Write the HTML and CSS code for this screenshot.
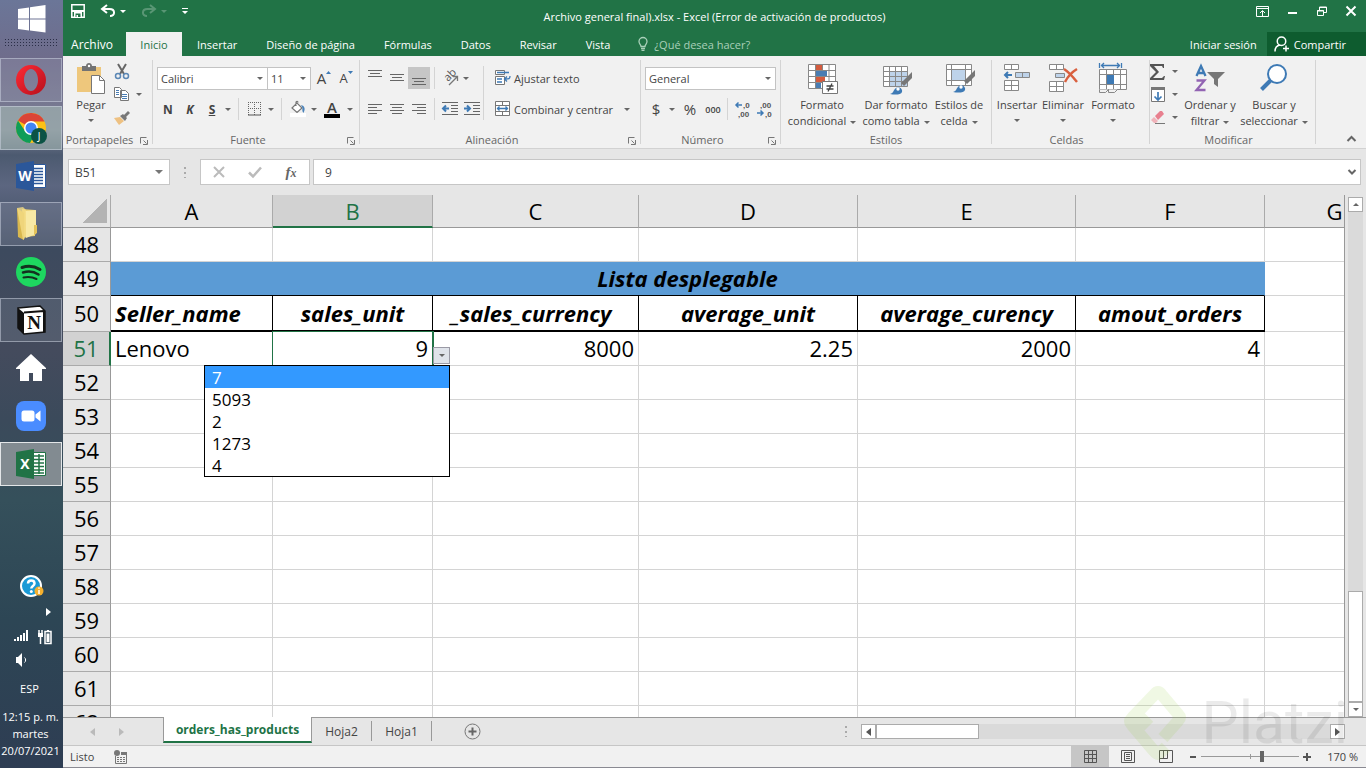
FILE: index.html
```html
<!DOCTYPE html>
<html lang="es">
<head>
  <meta charset="UTF-8" />
  <title>Archivo general final).xlsx - Excel</title>
  <link rel="stylesheet" href="styles.css">
</head>
<body>

  <!-- Barra de tareas -->
  <aside class="taskbar">
    <button class="start" aria-label="Inicio de Windows">
      <svg width="28" height="28" viewBox="0 0 28 28" fill="#fff"><path d="M0 4l11-1.600v11.100H0zM12 2.200L27.500 0v13.500H12zM0 14.500h11v11L0 24zM12 14.500h15.500V27.500L12 25.600z"/></svg>
    </button>
    <div class="grip"></div>
    <nav class="apps">
      <button class="app open" aria-label="Opera">
        <svg width="32" height="32" viewBox="0 0 32 32"><defs><linearGradient id="op" x1="0" y1="0" x2="1" y2="1"><stop offset="0" stop-color="#ff2a35"/><stop offset="1" stop-color="#b5101c"/></linearGradient></defs><path fill="url(#op)" fill-rule="evenodd" d="M16 1a15 15 0 1 0 0 30a15 15 0 1 0 0-30zM16 5c4 0 7 5 7 11s-3 11-7 11s-7-5-7-11s3-11 7-11z"/></svg>
      </button>
      <button class="app open light" aria-label="Google Chrome">
        <svg width="32" height="32" viewBox="0 0 32 32"><circle cx="16" cy="16" r="15" fill="#fbc116"/><path fill="#db4437" d="M16 16L3 8.500A15 15 0 0 1 29.500 9.500H16z"/><path fill="#0f9d58" d="M3 8.500A15 15 0 0 0 15 31l5-9-4-6-6 3z"/><circle cx="16" cy="16" r="7" fill="#fff"/><circle cx="16" cy="16" r="5.500" fill="#4285f4"/><circle cx="24" cy="24" r="8" fill="#0b5345"/><text x="24" y="28" text-anchor="middle" class="badge-text">J</text></svg>
      </button>
      <button class="app" aria-label="Word">
        <svg width="32" height="32" viewBox="0 0 32 32"><path fill="#fff" stroke="#2b579a" d="M16 4.500h14.500v23H16z"/><path stroke="#2b579a" stroke-width="1.500" d="M18 8.500h10M18 11.500h10M18 14.500h10M18 17.500h10M18 20.500h10M18 23.500h10"/><path fill="#2b579a" d="M1 4l18-3v30L1 28z"/><text x="10" y="21" text-anchor="middle" class="app-letter">W</text></svg>
      </button>
      <button class="app open" aria-label="Explorador de archivos">
        <svg width="32" height="36" viewBox="0 0 32 36"><path fill="#e9cf72" d="M7 3l13 1v26l-11 1z"/><path fill="#f8e9a5" d="M10 5l11-1v24l-10 4z"/><path fill="#d9b84f" d="M2 2l7 5v27l-6-3z"/><path fill="#f4dc86" d="M2 2l6-1 3 3v27l-3 3z" opacity=".8"/><path fill="#e3c25a" d="M19 19h3v8l-3 2z"/></svg>
      </button>
      <button class="app" aria-label="Spotify">
        <svg width="32" height="32" viewBox="0 0 32 32"><circle cx="16" cy="16" r="15" fill="#1ed760"/><g fill="none" stroke="#14301f" stroke-linecap="round"><path stroke-width="3" d="M7 11.500c6-2 13-1 18 2"/><path stroke-width="2.500" d="M8 16.500c5-1.500 11-1 15.500 2"/><path stroke-width="2" d="M8.500 21.500c5-1 9-.5 13 1.500"/></g></svg>
      </button>
      <button class="app open dark" aria-label="Notion">
        <svg width="32" height="32" viewBox="0 0 32 32"><path fill="#fff" stroke="#111" stroke-width="1.500" d="M3 4l22-2 5 5v21l-21 2-6-6z"/><path fill="#111" d="M3 4l6 5v21l-6-6z"/><path fill="none" stroke="#111" stroke-width="2" d="M9 8.500L29 7M29 7v21"/><text x="19" y="25" text-anchor="middle" class="notion-letter">N</text></svg>
      </button>
      <button class="app" aria-label="Carpeta personal">
        <svg width="32" height="32" viewBox="0 0 32 32" fill="#fff"><path d="M16 2L1 16v1h4v12h9v-8h4v8h9V17h4v-1z"/></svg>
      </button>
      <button class="app" aria-label="Zoom">
        <svg width="32" height="32" viewBox="0 0 32 32"><rect x="1" y="1" width="30" height="30" rx="8" fill="#4a8cff"/><rect x="6.500" y="10.500" width="13" height="11" rx="2.500" fill="#fff"/><path fill="#fff" d="M20.500 14.500l5-4v11l-5-4z"/></svg>
      </button>
      <button class="app open active" aria-label="Excel">
        <svg width="32" height="32" viewBox="0 0 32 32"><path fill="#fff" stroke="#217346" d="M16 4.500h14.500v23H16z"/><path stroke="#217346" stroke-width="1.500" d="M19 8h10M19 11.500h10M19 15h10M19 18.500h10M19 22h10M19 25h10M24 6v20"/><path fill="#217346" d="M1 4l18-3v30L1 28z"/><text x="10" y="21" text-anchor="middle" class="app-letter">X</text></svg>
      </button>
    </nav>

    <div class="tray">
      <svg class="help" width="24" height="24" viewBox="0 0 24 24"><circle cx="11" cy="11" r="10" fill="#1a9ad6" stroke="#fff" stroke-width="2"/><path fill="none" stroke="#fff" stroke-width="2.500" d="M8 8.500c0-4 6.500-4 6.500 0c0 2.500-3.200 2.500-3.200 5"/><circle cx="11.300" cy="16.500" r="1.500" fill="#fff"/><circle cx="19" cy="16" r="4.500" fill="#f5b02e"/><path stroke="#fff" stroke-width="1.500" d="M19 15v4M19 12.500v1.300"/></svg>
      <svg class="more" width="5" height="8" viewBox="0 0 5 8"><path fill="#fff" d="M0 0l5 4-5 4z"/></svg>
      <div class="tray-row">
        <svg width="16" height="14" viewBox="0 0 16 14" fill="#fff"><path d="M1 10h2v2H1zM4 8h2v4H4zM7 6h2v6H7zM10 4h2v8h-2zM13 1h2v11h-2z"/></svg>
        <svg width="16" height="16" viewBox="0 0 16 16"><path fill="none" stroke="#fff" stroke-width="1.500" d="M2 1v3M5 1v3M3.500 7v8M8 2.500h6v12H8z"/><path fill="#fff" d="M1 4h5v4H1zM9.500 4.500h3V13h-3zM10 1h2v2h-2z"/></svg>
      </div>
      <svg class="sound" width="13" height="14" viewBox="0 0 13 14"><path fill="#fff" d="M1 4h2l4-4v14l-4-4H1z"/><path fill="none" stroke="#fff" d="M9.500 4.500c1.500 1 1.500 4 0 5"/></svg>
      <span class="lang">ESP</span>
      <time class="clock" datetime="2021-07-20T12:15">12:15 p. m.<br>martes<br>20/07/2021</time>
    </div>
  </aside>

  <main class="excel">
    <header class="titlebar">
      <div class="quick">
        <button aria-label="Guardar"><svg width="14" height="14" viewBox="0 0 14 14"><path fill="none" stroke="#fff" stroke-width="1.500" d="M.8.800h12.400v12.400H.8z"/><path fill="#fff" d="M1 6h12v2H1zM3 8h8v6H3z"/><path fill="#217346" d="M4.500 9.500h5V13h-5z"/><path fill="#fff" d="M5.500 11H7v2H5.500z"/></svg></button>
        <button aria-label="Deshacer"><svg width="16" height="14" viewBox="0 0 16 14"><path fill="none" stroke="#fff" stroke-width="2" d="M7 1L2 5l5 4M2 5h7.500c6 0 6 7 .5 7"/></svg><i class="caret"></i></button>
        <button class="off" aria-label="Rehacer"><svg width="16" height="14" viewBox="0 0 16 14"><path fill="none" stroke="#fff" stroke-width="2" d="M9 1l5 4-5 4M14 5H6.500C.5 5 .5 12 6 12"/></svg><i class="caret"></i></button>
        <button aria-label="Personalizar barra"><svg width="6" height="7" viewBox="0 0 6 7"><path fill="#fff" d="M0 0h6v1H0zM0 3h6L3 6z"/></svg></button>
      </div>
      <h1>Archivo general final).xlsx - Excel (Error de activación de productos)</h1>
      <div class="window-buttons">
        <button aria-label="Opciones de cinta"><svg width="13" height="11" viewBox="0 0 13 11"><path fill="none" stroke="#fff" d="M.5.500h12v10H.5zM0 2.500h13M6.500 10V5M4 7l2.500-2.500L9 7"/></svg></button>
        <button aria-label="Minimizar"><svg width="10" height="11" viewBox="0 0 10 11"><path fill="#fff" d="M0 6h9v2H0z"/></svg></button>
        <button aria-label="Restaurar"><svg width="10" height="10" viewBox="0 0 10 10"><path fill="none" stroke="#fff" d="M.5 4.500h6v5h-6zM0 5h7M2.500 4V1h7v5.500H7M2.500 1.500h7"/></svg></button>
        <button aria-label="Cerrar"><svg width="10" height="10" viewBox="0 0 10 10"><path stroke="#fff" stroke-width="2" d="M.5.500l9 9M9.500.500l-9 9"/></svg></button>
      </div>
    </header>

    <nav class="tabs">
      <button class="tab file">Archivo</button>
      <button class="tab selected">Inicio</button>
      <button class="tab">Insertar</button>
      <button class="tab">Diseño de página</button>
      <button class="tab">Fórmulas</button>
      <button class="tab">Datos</button>
      <button class="tab">Revisar</button>
      <button class="tab">Vista</button>
      <button class="tell-me"><svg width="10" height="14" viewBox="0 0 10 14"><path fill="none" stroke="#a9d0b9" stroke-width="1.300" d="M3 9.500C3 7.500 1 7 1 4.500a4 4 0 0 1 8 0C9 7 7 7.500 7 9.500zM3 11.500h4M3.500 13.300h3"/></svg>¿Qué desea hacer?</button>
      <button class="login">Iniciar sesión</button>
      <button class="share"><svg width="16" height="16" viewBox="0 0 16 16"><path fill="none" stroke="#fff" stroke-width="1.500" d="M1 15.500c0-4 2-6 5-6.500M7.500 1a4 4 0 1 1 0 8.500a4 4 0 0 1 0-8.500M9 12.500h6M12 9.500v6"/></svg>Compartir</button>
    </nav>

    <!-- Cinta de opciones -->
    <section class="ribbon">
      <div class="group g-clipboard">
        <div class="group-body">
          <button class="big paste">
            <svg width="30" height="32" viewBox="0 0 30 32"><path fill="#eec77c" d="M1 4h24v25H1z"/><path fill="#737373" d="M6 3h4c0-4 6-4 6 0h4v5H6z"/><circle cx="13" cy="3" r="1.200" fill="#fff"/><path fill="#fff" stroke="#777" d="M15.500 12.500h8l5 5v13h-13z"/><path fill="none" stroke="#777" d="M23.500 12.500v5h5"/></svg>
            <span>Pegar</span><i class="caret"></i>
          </button>
          <div class="small-column">
            <button aria-label="Cortar"><svg width="16" height="16" viewBox="0 0 16 16"><path stroke="#666" stroke-width="2" d="M4 0l6 10M12 0L6 10"/><g fill="none" stroke="#5b87b5" stroke-width="1.500"><circle cx="4" cy="12" r="2.500"/><circle cx="12" cy="12" r="2.500"/></g></svg></button>
            <button aria-label="Copiar"><svg width="16" height="16" viewBox="0 0 16 16"><path fill="#fff" stroke="#777" d="M.5.500h5l2 2v8h-7zM6.500 3.500h5l3 3v7h-8z"/><path stroke="#4a7db3" d="M2 3.500h3M2 5.500h3M2 7.500h3M8 7.500h5M8 9.500h5M8 11.500h5"/></svg><i class="caret"></i></button>
            <button aria-label="Copiar formato"><svg width="16" height="16" viewBox="0 0 16 16"><path fill="#eec182" d="M0 8l6-1 4 4-5 4z"/><path fill="#777" d="M6 6l3-2 4 4-2 3zM10 5l4-4 2 2-4 4z"/></svg></button>
          </div>
        </div>
        <div class="group-label">Portapapeles<svg class="launcher" width="8" height="8" viewBox="0 0 8 8"><path fill="none" stroke="#777" d="M.5 6.500v-6h6M3.500 3.500l3 3M7.500 3v4.500H3"/></svg></div>
      </div>

      <div class="group g-font">
        <div class="group-body rows">
          <div class="row">
            <select class="combo font-name" aria-label="Fuente"><option>Calibri</option></select>
            <select class="combo font-size" aria-label="Tamaño de fuente"><option>11</option></select>
            <button class="tool grow" aria-label="Aumentar tamaño">A<svg width="5" height="3" viewBox="0 0 5 3"><path fill="#3e7ab5" d="M0 3l2.500-3L5 3z"/></svg></button>
            <button class="tool grow less" aria-label="Disminuir tamaño">A<svg width="5" height="3" viewBox="0 0 5 3"><path fill="#3e7ab5" d="M0 0h5L2.500 3z"/></svg></button>
          </div>
          <div class="row">
            <button class="tool bold">N</button>
            <button class="tool bold italic">K</button>
            <button class="tool bold under">S</button>
            <button class="drop" aria-label="Más subrayado"><i class="caret"></i></button>
            <span class="sep"></span>
            <button class="tool" aria-label="Bordes"><svg width="14" height="14" viewBox="0 0 14 14"><path fill="none" stroke="#666" stroke-dasharray="1 1" d="M.5 0v13M6.500 0v13M12.500 0v13M0 .5h13M0 6.500h13"/><path stroke="#555" d="M0 13h13"/></svg></button>
            <button class="drop" aria-label="Más bordes"><i class="caret"></i></button>
            <span class="sep"></span>
            <button class="tool" aria-label="Color de relleno"><svg width="16" height="16" viewBox="0 0 16 16"><path fill="#fff" stroke="#777" stroke-width="1.200" d="M2 7l5-5 5 5-5 4.500zM6 5V1.500c0-1.500 2-1.500 2 0"/><path fill="#4a82b9" d="M11 4c4 1 4.500 4 2.500 8c-1-1-1.500-3-1-5z"/><path fill="#fff" d="M0 12h16v4H0z"/></svg></button>
            <button class="drop" aria-label="Más rellenos"><i class="caret"></i></button>
            <button class="tool color"><span>A</span></button>
            <button class="drop" aria-label="Más colores"><i class="caret"></i></button>
          </div>
        </div>
        <div class="group-label">Fuente<svg class="launcher" width="8" height="8" viewBox="0 0 8 8"><path fill="none" stroke="#777" d="M.5 6.500v-6h6M3.500 3.500l3 3M7.500 3v4.500H3"/></svg></div>
      </div>

      <div class="group g-align">
        <div class="group-body">
          <div class="rows align-left">
            <div class="row">
              <button class="tool" aria-label="Alinear arriba"><svg width="14" height="16" viewBox="0 0 14 16"><path stroke="#666" d="M0 .5h14M2 3.500h10M0 6.500h14"/></svg></button>
              <button class="tool" aria-label="Alinear en medio"><svg width="14" height="16" viewBox="0 0 14 16"><path stroke="#666" d="M0 4.500h14M2 7.500h10M0 10.500h14"/></svg></button>
              <button class="tool pressed" aria-label="Alinear abajo"><svg width="14" height="16" viewBox="0 0 14 16"><path stroke="#666" d="M0 8.500h14M2 11.500h10M0 14.500h14"/></svg></button>
              <span class="sep"></span>
              <button class="tool" aria-label="Orientación"><svg width="17" height="16" viewBox="0 0 17 16"><text x="0" y="0" transform="translate(6 12) rotate(-45)" class="ab">ab</text><path fill="none" stroke="#777" stroke-width="1.300" d="M7 15l8-8M11 6.500h4.500V11"/></svg></button>
              <button class="drop" aria-label="Más orientación"><i class="caret"></i></button>
            </div>
            <div class="row">
              <button class="tool" aria-label="Alinear a la izquierda"><svg width="14" height="12" viewBox="0 0 14 12"><path stroke="#666" d="M0 1.500h14M0 4.500h9M0 7.500h14M0 10.500h9"/></svg></button>
              <button class="tool" aria-label="Centrar"><svg width="14" height="12" viewBox="0 0 14 12"><path stroke="#666" d="M0 1.500h14M2 4.500h10M0 7.500h14M2 10.500h10"/></svg></button>
              <button class="tool" aria-label="Alinear a la derecha"><svg width="14" height="12" viewBox="0 0 14 12"><path stroke="#666" d="M0 1.500h14M5 4.500h9M0 7.500h14M5 10.500h9"/></svg></button>
              <span class="sep"></span>
              <button class="tool" aria-label="Disminuir sangría"><svg width="16" height="14" viewBox="0 0 16 14"><path stroke="#666" d="M0 .5h16M9 3.500h7M9 6.500h7M9 9.500h7M0 12.500h16"/><path fill="none" stroke="#3e7ab5" stroke-width="2" d="M7 6.500H1M4 3.500l-3 3 3 3"/></svg></button>
              <button class="tool" aria-label="Aumentar sangría"><svg width="16" height="14" viewBox="0 0 16 14"><path stroke="#666" d="M0 .5h16M9 3.500h7M9 6.500h7M9 9.500h7M0 12.500h16"/><path fill="none" stroke="#3e7ab5" stroke-width="2" d="M0 6.500h6M3 3.500l3 3-3 3"/></svg></button>
            </div>
          </div>
          <div class="rows align-right">
            <button class="wide"><svg width="16" height="16" viewBox="0 0 16 16"><path fill="#fff" stroke="#777" d="M.5.500h9v4h-9zM.5 6.500h9v8h-9z"/><path fill="none" stroke="#3e7ab5" stroke-width="1.300" d="M2 2.500h12M2 9h5M2 12h5M15 6c0 3-1 3-5 3M12 6.500L9.500 9l2.500 2.500"/></svg>Ajustar texto</button>
            <button class="wide"><svg width="16" height="16" viewBox="0 0 16 16"><path fill="#fff" stroke="#777" d="M.5.500h14v14H.5zM.5 4.500h14M.5 10.500h14M7.500.500v4M7.500 10.500v4"/><path fill="none" stroke="#3e7ab5" stroke-width="1.300" d="M2 7.500h11M4.500 5.500l-2 2 2 2M10.500 5.500l2 2-2 2"/></svg>Combinar y centrar<i class="caret"></i></button>
          </div>
        </div>
        <div class="group-label">Alineación<svg class="launcher" width="8" height="8" viewBox="0 0 8 8"><path fill="none" stroke="#777" d="M.5 6.500v-6h6M3.500 3.500l3 3M7.500 3v4.500H3"/></svg></div>
      </div>

      <div class="group g-number">
        <div class="group-body rows">
          <div class="row"><select class="combo number-format" aria-label="Formato de número"><option>General</option></select></div>
          <div class="row">
            <button class="tool sign">$</button>
            <button class="drop" aria-label="Más monedas"><i class="caret"></i></button>
            <button class="tool sign percent">%</button>
            <button class="tool zeros">000</button>
            <span class="sep"></span>
            <button class="tool" aria-label="Aumentar decimales"><svg width="16" height="18" viewBox="0 0 16 18"><text x="8" y="8" class="dec">,0</text><text x="3" y="17" class="dec">,00</text><path fill="none" stroke="#3e7ab5" stroke-width="1.500" d="M7 5H1M3.500 2.500L1 5l2.500 2.500"/></svg></button>
            <button class="tool" aria-label="Disminuir decimales"><svg width="16" height="18" viewBox="0 0 16 18"><text x="3" y="8" class="dec">,00</text><text x="8" y="17" class="dec">,0</text><path fill="none" stroke="#3e7ab5" stroke-width="1.500" d="M0 13h6M3.500 10.500L6 13l-2.500 2.500"/></svg></button>
          </div>
        </div>
        <div class="group-label">Número<svg class="launcher" width="8" height="8" viewBox="0 0 8 8"><path fill="none" stroke="#777" d="M.5 6.500v-6h6M3.500 3.500l3 3M7.500 3v4.500H3"/></svg></div>
      </div>

      <div class="group g-styles">
        <div class="group-body">
          <button class="big w-76">
            <svg width="32" height="32" viewBox="0 0 32 32"><path fill="#fff" stroke="#888" d="M2.500 1.500h27v24h-27zM2.500 7.500h27M2.500 13.500h27M2.500 19.500h27M9.500 1.500v24M16.500 1.500v24M23 1.500v24"/><path fill="#d35b3e" d="M10 2h6v5h-6zM10 14h9v5h-9z"/><path fill="#4a7db3" d="M10 8h11v5H10zM10 20h5v5h-5z"/><path fill="#fff" stroke="#777" d="M16.500 18.500h15v12h-15z"/><path stroke="#444" stroke-width="1.300" d="M20.500 23h7M20.500 26h7M26 20.500l-4 8"/></svg>
            <span>Formato</span><span>condicional<i class="caret"></i></span>
          </button>
          <button class="big w-72">
            <svg width="32" height="32" viewBox="0 0 32 32"><path fill="#fff" stroke="#888" d="M3.500 3.500h24v20h-24z"/><path fill="#bed3ea" d="M10 9h17v14H10z"/><path fill="none" stroke="#888" d="M3.500 8.500h24M3.500 13.500h24M3.500 18.500h24M9.500 3.500v20M15.500 3.500v20M21.500 3.500v20"/><path fill="#777" d="M32 9v6l-8 8-3-3z"/><path fill="#3e7ab5" d="M10 31c4-1 3-4 6-6s7 1 6 4-7 3-12 2z"/><circle cx="18" cy="26" r="1.700" fill="#fff"/></svg>
            <span>Dar formato</span><span>como tabla<i class="caret"></i></span>
          </button>
          <button class="big w-54">
            <svg width="32" height="32" viewBox="0 0 32 32"><path fill="#fff" stroke="#888" d="M3.500 1.500h25v21h-25zM3.500 6.500h25M3.500 17.500h25M8.500 1.500v21M22.500 1.500v21"/><path fill="#bed3ea" d="M9 7h13v10H9z"/><path fill="#777" d="M32 7v6l-8 8-3-3z"/><path fill="#3e7ab5" d="M10 29c4-1 3-4 6-6s7 1 6 4-7 3-12 2z"/><circle cx="18" cy="24" r="1.700" fill="#fff"/></svg>
            <span>Estilos de</span><span>celda<i class="caret"></i></span>
          </button>
        </div>
        <div class="group-label">Estilos</div>
      </div>

      <div class="group g-cells">
        <div class="group-body">
          <button class="big w-44">
            <svg width="28" height="32" viewBox="0 0 28 32"><path fill="#fff" stroke="#888" d="M1.500 1.500h14v5h-14zM8.500 1.500v5M1.500 17.500h14v10h-14zM1.500 22.500h14M8.500 17.500v10"/><path fill="#bed3ea" stroke="#888" d="M12.500 9.500h14v5h-14zM19.500 9.500v5"/><path fill="none" stroke="#3e7ab5" stroke-width="2" d="M9 12H2M5 9l-3 3 3 3"/></svg>
            <span>Insertar</span><i class="caret"></i>
          </button>
          <button class="big w-44">
            <svg width="30" height="32" viewBox="0 0 30 32"><path fill="#fff" stroke="#888" d="M1.500 1.500h14v5h-14zM8.500 1.500v5M1.500 18.500h14v10h-14zM1.500 23.500h14M8.500 18.500v10"/><path fill="#bed3ea" stroke="#888" d="M7.500 10.500h9v4h-9z"/><path fill="none" stroke="#d9603f" stroke-width="2.500" d="M16 6c5 3 9 8 13 13M29 6c-5 3-9 7-12 13"/></svg>
            <span>Eliminar</span><i class="caret"></i>
          </button>
          <button class="big w-52">
            <svg width="30" height="32" viewBox="0 0 30 32"><path fill="#fff" stroke="#888" d="M1.500 6.500h27v20h-27zM1.500 11.500h27M1.500 21.500h27M8.500 6.500v20M15.500 6.500v20M22.500 6.500v20"/><path fill="#f1f1f1" stroke="#888" d="M1.500 26.500v3h6l3-3v3h6l3-3"/><path fill="#3e7ab5" d="M9 12h7v9H9z"/><path fill="none" stroke="#3e7ab5" stroke-width="1.300" d="M1.500 0v5M23.500 0v5M3 2.500h19M6 0L3.500 2.500 6 5M19 0l2.500 2.500L19 5"/></svg>
            <span>Formato</span><i class="caret"></i>
          </button>
        </div>
        <div class="group-label">Celdas</div>
      </div>

      <div class="group g-edit">
        <div class="group-body">
          <div class="small-column">
            <button aria-label="Autosuma"><svg width="16" height="16" viewBox="0 0 16 16"><path fill="#555" d="M0 0h14v4h-1l-1-2H4l5 6-6 6h9l2-2h1l-1 4H0v-2l6-6-6-6z"/></svg><i class="caret"></i></button>
            <button aria-label="Rellenar"><svg width="16" height="16" viewBox="0 0 16 16"><path fill="#fff" stroke="#777" d="M1.500.500h13v14h-13z"/><path fill="#777" d="M1 0h14v3H1z"/><path fill="none" stroke="#3e7ab5" stroke-width="1.700" d="M8 5v8M4.500 9.500L8 13l3.500-3.500"/></svg><i class="caret"></i></button>
            <button aria-label="Borrar"><svg width="16" height="16" viewBox="0 0 16 16"><path fill="#e8808f" d="M5 6l5-5h2l2 3-6 6z"/><path fill="#f0b3ba" d="M4 7l4 4-2 2H4L1 10z"/><path stroke="#777" d="M5 13.500h10"/></svg><i class="caret"></i></button>
          </div>
          <button class="big w-60">
            <svg width="30" height="32" viewBox="0 0 30 32"><path fill="none" stroke="#3e7ab5" stroke-width="2.300" d="M1.500 13L6 3l4.500 10M3 10h6"/><path fill="none" stroke="#9264b3" stroke-width="2.300" d="M1.500 17.500h8l-8 9.500h9"/><path fill="#777" d="M12 9h18l-7 7v8l-4-3v-5z"/></svg>
            <span>Ordenar y</span><span>filtrar<i class="caret"></i></span>
          </button>
          <button class="big w-68">
            <svg width="30" height="32" viewBox="0 0 30 32"><circle cx="18" cy="11" r="9" fill="#fff" stroke="#3e7ab5" stroke-width="2"/><path stroke="#3e7ab5" stroke-width="4" d="M11.500 17.500l-9 9"/></svg>
            <span>Buscar y</span><span>seleccionar<i class="caret"></i></span>
          </button>
        </div>
        <div class="group-label">Modificar</div>
      </div>
      <button class="collapse" aria-label="Contraer la cinta"><svg width="9" height="6" viewBox="0 0 9 6"><path fill="none" stroke="#666" stroke-width="2" d="M.5 5l4-4 4 4"/></svg></button>
    </section>

    <section class="formula-bar">
      <select class="name-box" aria-label="Cuadro de nombres"><option>B51</option></select>
      <span class="dots"></span>
      <div class="formula-buttons">
        <button aria-label="Cancelar"><svg width="12" height="12" viewBox="0 0 12 12"><path stroke="#bbb" stroke-width="2" d="M1 1l10 10M11 1L1 11"/></svg></button>
        <button aria-label="Introducir"><svg width="14" height="12" viewBox="0 0 14 12"><path fill="none" stroke="#bbb" stroke-width="2.500" d="M1 6.500l4 4 8-9"/></svg></button>
        <button class="fx"><i>f</i><i class="x">x</i></button>
      </div>
      <div class="formula-field">
        <input type="text" value="9" aria-label="Barra de fórmulas">
        <svg width="8" height="6" viewBox="0 0 8 6"><path fill="none" stroke="#666" stroke-width="2" d="M.5 1L4 4.500 7.500 1"/></svg>
      </div>
    </section>

    <!-- Hoja -->
    <section class="sheet">
      <div class="sheet-view">
        <table class="cells">
          <colgroup><col class="c-head"><col class="c-a"><col class="c-b"><col class="c-c"><col class="c-d"><col class="c-e"><col class="c-f"><col class="c-g"></colgroup>
          <thead>
            <tr><th class="corner"></th><th>A</th><th class="current">B</th><th>C</th><th>D</th><th>E</th><th>F</th><th>G</th></tr>
          </thead>
          <tbody>
            <tr><th>48</th><td></td><td></td><td></td><td></td><td></td><td></td><td></td></tr>
            <tr class="title-row"><th>49</th><td colspan="6">Lista desplegable</td><td></td></tr>
            <tr class="name-row"><th>50</th><td class="first">Seller_name</td><td>sales_unit</td><td class="first indent">_sales_currency</td><td>average_unit</td><td>average_curency</td><td>amout_orders</td><td></td></tr>
            <tr class="data-row">
              <th class="current">51</th><td class="text">Lenovo</td>
              <td class="active-cell">9
                <button class="list-button" aria-label="Abrir lista"><i class="caret"></i></button>
                <select class="list" size="5" aria-label="sales_unit">
                  <option selected>7</option>
                  <option>5093</option>
                  <option>2</option>
                  <option>1273</option>
                  <option>4</option>
                </select>
              </td>
              <td>8000</td><td>2.25</td><td>2000</td><td>4</td><td></td>
            </tr>
            <tr><th>52</th><td></td><td></td><td></td><td></td><td></td><td></td><td></td></tr>
            <tr><th>53</th><td></td><td></td><td></td><td></td><td></td><td></td><td></td></tr>
            <tr><th>54</th><td></td><td></td><td></td><td></td><td></td><td></td><td></td></tr>
            <tr><th>55</th><td></td><td></td><td></td><td></td><td></td><td></td><td></td></tr>
            <tr><th>56</th><td></td><td></td><td></td><td></td><td></td><td></td><td></td></tr>
            <tr><th>57</th><td></td><td></td><td></td><td></td><td></td><td></td><td></td></tr>
            <tr><th>58</th><td></td><td></td><td></td><td></td><td></td><td></td><td></td></tr>
            <tr><th>59</th><td></td><td></td><td></td><td></td><td></td><td></td><td></td></tr>
            <tr><th>60</th><td></td><td></td><td></td><td></td><td></td><td></td><td></td></tr>
            <tr><th>61</th><td></td><td></td><td></td><td></td><td></td><td></td><td></td></tr>
            <tr><th>62</th><td></td><td></td><td></td><td></td><td></td><td></td><td></td></tr>
          </tbody>
        </table>
      </div>
      <div class="v-scroll">
        <button aria-label="Subir"><i class="caret up"></i></button>
        <div class="v-track"><div class="v-thumb"></div></div>
        <button aria-label="Bajar"><i class="caret"></i></button>
      </div>
    </section>

    <nav class="sheet-tabs">
      <div class="sheet-nav">
        <button aria-label="Hoja anterior"><i class="caret left"></i></button>
        <button aria-label="Hoja siguiente"><i class="caret right"></i></button>
      </div>
      <button class="sheet-tab selected">orders_has_products</button>
      <button class="sheet-tab">Hoja2</button>
      <button class="sheet-tab">Hoja1</button>
      <button class="add-sheet" aria-label="Hoja nueva"><svg width="17" height="17" viewBox="0 0 17 17"><circle cx="8.500" cy="8.500" r="7.500" fill="none" stroke="#777"/><path stroke="#666" stroke-width="2" d="M4.500 8.500h8M8.500 4.500v8"/></svg></button>
      <span class="dots"></span>
      <div class="h-scroll">
        <button aria-label="Izquierda"><i class="caret left"></i></button>
        <div class="h-track"><div class="h-thumb"></div></div>
        <button aria-label="Derecha"><i class="caret right"></i></button>
      </div>
    </nav>

    <footer class="status">
      <span>Listo</span>
      <button class="macro" aria-label="Grabar macro"><svg width="14" height="14" viewBox="0 0 14 14"><path fill="none" stroke="#777" d="M1.500 6v7.500h11v-11H7M3 7.500h2M6 7.500h2M9 7.500h2M3 9.500h2M6 9.500h2M9 9.500h2M3 11.500h2M6 11.500h2M9 11.500h2"/><path fill="#777" d="M7 2h6v3H7z"/><circle cx="3" cy="3" r="3" fill="#777"/></svg></button>
      <div class="views">
        <button class="view pressed" aria-label="Normal"><svg width="13" height="13" viewBox="0 0 13 13"><path fill="none" stroke="#555" d="M.5.500h12v12H.5zM.5 4.500h12M.5 8.500h12M4.500.500v12M8.500.500v12"/></svg></button>
        <button class="view" aria-label="Diseño de página"><svg width="14" height="13" viewBox="0 0 14 13"><path fill="none" stroke="#555" d="M.5.500h13v12H.5zM3.500 2.500h7v8h-7zM5 4.500h4M5 6.500h4M5 8.500h4"/></svg></button>
        <button class="view" aria-label="Vista previa de salto"><svg width="14" height="13" viewBox="0 0 14 13"><path fill="none" stroke="#555" d="M.5.500h13v12H.5zM.5 8.500h8v-8M4.500.500v8"/></svg></button>
      </div>
      <button class="zoom-step" aria-label="Alejar"><svg width="8" height="8" viewBox="0 0 8 8"><path fill="#555" d="M1 3h6v2H1z"/></svg></button>
      <input class="zoom" type="range" min="10" max="240" value="153" aria-label="Zoom">
      <button class="zoom-step" aria-label="Acercar"><svg width="8" height="8" viewBox="0 0 8 8"><path fill="#555" d="M0 3h8v2H0zM3 0h2v8H3z"/></svg></button>
      <span class="zoom-value">170 %</span>
    </footer>

    <div class="watermark">
      <svg width="64" height="76" viewBox="0 0 64 76"><path fill="none" stroke="#98ca3f" stroke-width="12" stroke-linejoin="round" d="M26 41l-9-9M40 53l15-17c3-3 3-4 0-7L39 10c-3-4-5-4-8 0L9 33c-3 3-3 4 0 7l22 26c3 4 5 4 8 0l4-4"/></svg>
      <span>Platzi</span>
    </div>
  </main>

</body>
</html>
```
FILE: styles.css
```css
* {
  box-sizing: border-box;
}

body {
  margin: 0;
  height: 100vh;
  display: flex;
  overflow: hidden;
  font-family: "Open Sans", "Noto Sans", sans-serif;
  font-size: 11px;
  color: #444;
}

button, select, input {
  font: inherit;
  color: inherit;
  margin: 0;
  padding: 0;
  border: none;
  background: none;
}

button {
  display: flex;
  align-items: center;
  justify-content: center;
  white-space: nowrap;
}

svg {
  display: block;
  flex: none;
  overflow: visible;
}

.caret {
  flex: none;
  display: inline-block;
  border: 3px solid transparent;
  border-top-color: #666;
  border-bottom: none;
}

.caret.up {
  border-bottom: 3px solid #666;
  border-top: none;
}

.caret.left {
  border: 4px solid transparent;
  border-right: 5px solid #555;
  border-left: none;
}

.caret.right {
  border: 4px solid transparent;
  border-left: 5px solid #555;
  border-right: none;
}

/* Barra de tareas */
.taskbar {
  flex: none;
  width: 63px;
  display: flex;
  flex-direction: column;
  color: #fff;
  background: linear-gradient(#6b7698 0, #6f6c8b 60px, #7b7f94 130px, #4c5a70 155px, #5c6680 185px, #3d4a5e 250px, #444b5d 350px, #3b4a5b 420px, #35505b 500px, #2d4655 620px, #2e3d53 100%);
}

.start {
  height: 38px;
}

.grip {
  height: 10px;
  margin: 0 4px 10px 4px;
  background-image: radial-gradient(circle, #2b2f48 1px, transparent 1px);
  background-size: 3px 3px;
}

.apps {
  display: flex;
  flex-direction: column;
  gap: 4px;
  padding-right: 1px;
}

.app {
  height: 44px;
  border: 1px solid transparent;
}

.app.open {
  background: rgba(160, 165, 185, 0.25);
  border-color: rgba(210, 215, 230, 0.5);
}

.app.open.light {
  background: rgba(165, 185, 180, 0.6);
}

.app.open.dark {
  background: rgba(130, 145, 160, 0.25);
}

.app.open.active {
  background: #828b91;
  border-color: #e3e6e8;
}

.badge-text {
  font-size: 10px;
  fill: #fff;
}

.app-letter {
  font-size: 14px;
  font-weight: 700;
  fill: #fff;
}

.notion-letter {
  font-family: "Liberation Serif", serif;
  font-size: 19px;
  font-weight: 700;
  fill: #111;
}

.tray {
  margin-top: auto;
  display: flex;
  flex-direction: column;
  align-items: center;
  padding-bottom: 9px;
}

.more {
  align-self: flex-end;
  margin: 9px 12px 13px;
}

.tray-row {
  display: flex;
  gap: 8px;
  padding-left: 2px;
}

.sound {
  align-self: flex-start;
  margin: 8px 15px 13px;
}

.lang {
  line-height: 17px;
  padding-right: 4px;
  margin-bottom: 11px;
}

.clock {
  line-height: 17px;
  padding-right: 2px;
  text-align: center;
  white-space: nowrap;
}

/* Ventana de Excel */
.excel {
  flex: 1;
  min-width: 0;
  display: flex;
  flex-direction: column;
  position: relative;
  background: #e6e6e6;
  border-bottom: 1px solid #8a8a92;
}

.titlebar {
  flex: none;
  height: 32px;
  display: flex;
  align-items: center;
  background: #217346;
  color: #fff;
}

.titlebar h1 {
  flex: 1;
  margin: 0;
  font-size: 11px;
  font-weight: 400;
  text-align: center;
}

.quick {
  display: flex;
  align-items: center;
  gap: 15px;
  width: 124px;
  padding: 0 0 10px 8px;
}

.quick button {
  gap: 4px;
}

.quick .caret {
  border-top-color: #fff;
}

.quick .off {
  opacity: 0.25;
}

.window-buttons {
  display: flex;
  justify-content: flex-end;
  align-items: center;
  gap: 19px;
  width: 124px;
  padding: 0 10px 10px 0;
}

.tabs {
  flex: none;
  height: 24px;
  display: flex;
  background: #217346;
  color: #fff;
}

.tab {
  padding: 0 14px 0 15px;
}

.tab.file {
  width: 63px;
  padding: 0 5px 0 0;
  font-size: 12px;
}

.tab.selected {
  width: 56px;
  padding: 0;
  background: #f1f1f1;
  color: #217346;
}

.tell-me {
  gap: 6px;
  margin-left: 14px;
  color: #a9d0b9;
}

.login {
  margin-left: auto;
  padding: 0 10px;
}

.share {
  gap: 4px;
  padding: 0 20px 0 7px;
  background: #0e5c2f;
}

/* Cinta */
.ribbon {
  flex: none;
  height: 93px;
  display: flex;
  padding: 4px 0;
  background: #f1f1f1;
  border-bottom: 1px solid #d2d2d2;
}

.group {
  flex: none;
  display: flex;
  flex-direction: column;
  border-right: 1px solid #d4d4d4;
}

.g-clipboard { width: 90px; }
.g-font { width: 207px; }
.g-align { width: 281px; }
.g-number { width: 140px; }
.g-styles { width: 211px; }
.g-cells { width: 158px; }
.g-edit { width: 166px; }

.group-body {
  flex: 1;
  display: flex;
}

.group-label {
  display: flex;
  height: 12px;
  line-height: 16px;
  justify-content: center;
  color: #666;
  position: relative;
}

.g-clipboard .group-label,
.g-font .group-label,
.g-align .group-label,
.g-number .group-label {
  padding-right: 16px;
}

.g-cells .group-label,
.g-edit .group-label {
  padding-right: 8px;
}

.launcher {
  position: absolute;
  right: 4px;
  top: 5px;
}

.rows {
  display: flex;
  flex-direction: column;
  gap: 9px;
  padding: 7px 0 0 4px;
}

.row {
  display: flex;
  height: 22px;
}

.tool {
  width: 22px;
  height: 22px;
}

.tool.pressed {
  background: #c6c6c6;
}

.drop {
  width: 10px;
}

.sep {
  width: 1px;
  margin: 0 5px;
  background: #d4d4d4;
}

.g-align .sep,
.g-number .sep {
  margin: 0 4px;
}

.combo {
  appearance: none;
  height: 23px;
  padding: 0 3px;
  border: 1px solid #c3c3c3;
  background: #fff url("data:image/svg+xml,%3Csvg xmlns='http://www.w3.org/2000/svg' width='6' height='3'%3E%3Cpath d='M0 0h6L3 3z' fill='%23666'/%3E%3C/svg%3E") no-repeat right 4px center;
}

.font-name {
  width: 111px;
}

.font-size {
  width: 43px;
  border-left: none;
}

.number-format {
  width: 131px;
}

.grow {
  align-items: center;
  width: 22px;
  margin-left: 2px;
  font-size: 15px;
}

.grow svg {
  align-self: flex-start;
  margin-top: 4px;
}

.grow.less {
  margin-left: 0;
  font-size: 13px;
}

.bold {
  font-size: 12px;
  font-weight: 700;
}

.italic {
  font-style: italic;
}

.under {
  text-decoration: underline;
}

.color {
  width: 26px;
}

.color span {
  width: 16px;
  height: 18px;
  line-height: 14px;
  font-size: 15px;
  font-weight: 600;
  border-bottom: 4px solid #000;
}

.ab {
  font-size: 11px;
  fill: #555;
}

.align-left {
  width: 124px;
  margin-right: 11px;
  background: linear-gradient(#d4d4d4, #d4d4d4) no-repeat right 6px / 1px 54px;
}

.align-right {
  padding-left: 0;
}

.wide {
  justify-content: flex-start;
  height: 22px;
  gap: 3px;
}

.wide .caret {
  margin-left: 8px;
}

.sign {
  font-size: 15px;
}

.percent {
  width: 26px;
}

.zeros {
  width: 20px;
  font-size: 9px;
  font-weight: 600;
}

.dec {
  font-family: "Liberation Sans", sans-serif;
  font-size: 8px;
  font-weight: 700;
  fill: #555;
}

.big {
  flex-direction: column;
  justify-content: flex-start;
  padding-top: 3px;
  line-height: 16px;
}

.big svg {
  margin-bottom: 2px;
}

.big > .caret {
  margin-top: 6px;
}

.big span .caret {
  margin-left: 4px;
  vertical-align: middle;
}

.paste {
  width: 36px;
  margin-left: 10px;
}

.w-44 { width: 44px; }
.w-52 { width: 52px; }
.w-54 { width: 54px; }
.w-60 { width: 60px; }
.w-68 { width: 68px; }
.w-72 { width: 72px; }
.w-76 { width: 76px; }

.g-styles .group-body {
  padding-left: 3px;
}

.g-cells .group-body {
  padding-left: 3px;
  gap: 2px;
}

.small-column {
  display: flex;
  flex-direction: column;
  padding-left: 5px;
}

.g-edit .small-column {
  width: 30px;
  padding-left: 0;
}

.small-column button {
  height: 23px;
  gap: 6px;
  justify-content: flex-start;
}

.collapse {
  margin: auto 10px 2px auto;
}

/* Barra de fórmulas */
.formula-bar {
  flex: none;
  display: flex;
  padding: 10px 5px;
  height: 46px;
  font-size: 12px;
}

.name-box {
  appearance: none;
  width: 102px;
  padding: 0 6px;
  border: 1px solid #c6c6c6;
  background: #fff url("data:image/svg+xml,%3Csvg xmlns='http://www.w3.org/2000/svg' width='8' height='4'%3E%3Cpath d='M0 0h8L4 4z' fill='%23777'/%3E%3C/svg%3E") no-repeat right 6px center;
}

.dots {
  width: 2px;
  height: 11px;
  margin: auto 14px;
  background: repeating-linear-gradient(#aaa 0 2px, transparent 2px 5px);
}

.formula-buttons {
  display: flex;
  width: 110px;
  border: 1px solid #c6c6c6;
  background: #fff;
}

.formula-buttons button {
  flex: 1;
}

.formula-buttons .fx {
  font-family: "Liberation Serif", serif;
  font-size: 15px;
  font-weight: 700;
  color: #666;
}

.fx .x {
  font-size: 12px;
  padding-top: 3px;
}

.formula-field {
  flex: 1;
  display: flex;
  align-items: center;
  margin-left: 3px;
  padding-right: 4px;
  border: 1px solid #c6c6c6;
  background: #fff;
}

.formula-field input {
  flex: 1;
  height: 24px;
  padding: 0 11px;
}

/* Hoja */
.sheet {
  flex: 1;
  min-height: 0;
  display: flex;
}

.sheet-view {
  flex: 1;
  overflow: hidden;
  background: #fff;
  border-right: 1px solid #999;
}

.cells {
  table-layout: fixed;
  width: 100%;
  min-width: 1342px;
  border-collapse: separate;
  border-spacing: 0;
  font-size: 22px;
  line-height: 30px;
  color: #000;
}

.c-head { width: 48px; }
.c-a { width: 162px; }
.c-b { width: 160px; }
.c-c { width: 206px; }
.c-d { width: 219px; }
.c-e { width: 218px; }
.c-f { width: 189px; }

.cells th {
  padding: 0;
  font-weight: 400;
  text-align: center;
  background: #e6e6e6;
  border-right: 1px solid #aaa;
  border-bottom: 1px solid #aaa;
}

.cells thead th {
  height: 33px;
  border-bottom-color: #999;
}

.cells td {
  height: 34px;
  padding: 0 4px 2px;
  border-right: 1px solid #d4d4d4;
  border-bottom: 1px solid #d4d4d4;
}

.cells tbody th {
  padding-bottom: 2px;
  border-right-color: #999;
}

.cells .corner {
  background: linear-gradient(135deg, transparent 50%, #b3b3b3 50%) no-repeat 20px 4px / 24px 24px #e6e6e6;
}

.cells .current {
  background: #d2d2d2;
  color: #217346;
}

.cells thead .current {
  border-bottom: 2px solid #217346;
}

.cells tbody .current {
  border-right: 2px solid #217346;
}

.title-row td,
.name-row td {
  font-weight: 700;
  font-style: italic;
  text-align: center;
}

.title-row td[colspan] {
  background: #5b9bd5;
  border-right-color: #5b9bd5;
  border-bottom-color: #000;
}

.cells .name-row td {
  height: 36px;
  padding-bottom: 0;
  border-right-color: #000;
  border-bottom: 2px solid #000;
}

.cells .name-row td:last-child {
  border-right-color: #d4d4d4;
  border-bottom: 1px solid #d4d4d4;
}

.cells .name-row .first {
  text-align: left;
}

.cells .name-row .indent {
  padding-left: 18px;
}

.data-row td {
  text-align: right;
}

.data-row .text {
  text-align: left;
}

.cells .active-cell {
  position: relative;
  border-right-color: #217346;
  box-shadow: 0 0 0 1px #217346;
}

.list-button {
  position: absolute;
  left: 100%;
  bottom: 1px;
  width: 17px;
  height: 17px;
  margin-left: 1px;
  border: 1px solid #9a9aa5;
  background: #dfe3ea;
}

.list {
  position: absolute;
  z-index: 1;
  top: 100%;
  right: -18px;
  width: 246px;
  height: 112px;
  border: 1px solid #000;
  border-radius: 0;
  outline: none;
  overflow: hidden;
  background: #fff;
  font-size: 17px;
}

.list option {
  height: 22px;
  min-height: 22px;
  line-height: 22px;
  padding: 0 7px;
}

.list option:checked {
  background: linear-gradient(#3399ff, #3399ff);
  -webkit-text-fill-color: #fff;
}

.v-scroll {
  flex: none;
  width: 21px;
  display: flex;
  flex-direction: column;
  padding: 2px 3px 0 3px;
}

.v-scroll button,
.h-scroll button {
  flex: none;
  width: 15px;
  height: 15px;
  border: 1px solid #ababab;
  background: #fff;
}

.v-track {
  flex: 1;
  display: flex;
  flex-direction: column;
  justify-content: flex-end;
  background: #dadada;
}

.v-thumb {
  height: 111px;
  border: 1px solid #ababab;
  background: #fff;
}

/* Pestañas de hojas */
.sheet-tabs {
  flex: none;
  height: 28px;
  display: flex;
  padding-right: 21px;
  font-size: 12px;
  border-top: 1px solid #999;
}

.sheet-nav {
  display: flex;
  justify-content: center;
  gap: 24px;
  width: 100px;
  padding-right: 13px;
}

.sheet-nav .caret {
  opacity: 0.3;
}

.sheet-tab {
  width: 60px;
  height: 20px;
  margin-top: 3px;
  border-right: 1px solid #999;
}

.sheet-tab.selected {
  width: 149px;
  height: 26px;
  margin-top: -1px;
  font-weight: 700;
  color: #217346;
  background: #fff;
  border-left: 1px solid #999;
  border-bottom: 2px solid #217346;
}

.add-sheet {
  margin-left: 32px;
}

.sheet-tabs .dots {
  margin-left: auto;
}

.h-scroll {
  display: flex;
  align-items: center;
  width: 484px;
}

.h-track {
  flex: 1;
  height: 15px;
  background: #dadada;
}

.h-thumb {
  width: 103px;
  height: 15px;
  border: 1px solid #ababab;
  background: #fff;
}

/* Barra de estado */
.status {
  flex: none;
  height: 22px;
  display: flex;
  align-items: center;
  padding: 0 8px 0 7px;
  background: #f1f1f1;
  border-top: 1px solid #c6c6c6;
}

.macro {
  margin-left: 20px;
}

.views {
  display: flex;
  align-self: stretch;
  margin: 0 2px 0 auto;
}

.view {
  width: 38px;
}

.view.pressed {
  background: #c6c6c6;
}

.zoom-step {
  width: 12px;
}

.zoom {
  appearance: none;
  width: 98px;
  height: 13px;
  margin: 0 2px;
  background: linear-gradient(#999, #999) no-repeat center / 100% 1px, linear-gradient(#999, #999) no-repeat center / 1px 5px;
}

.zoom::-webkit-slider-thumb {
  appearance: none;
  width: 4px;
  height: 11px;
  background: #666;
}

.zoom-value {
  margin-left: 14px;
}

/* Marca de agua */
.watermark {
  position: absolute;
  right: 18px;
  bottom: 6px;
  display: flex;
  align-items: center;
  gap: 14px;
  pointer-events: none;
}

.watermark svg {
  opacity: 0.14;
}

.watermark span {
  font-family: Roboto, sans-serif;
  font-size: 59px;
  line-height: 72px;
  color: rgba(0, 0, 0, 0.08);
}
```
